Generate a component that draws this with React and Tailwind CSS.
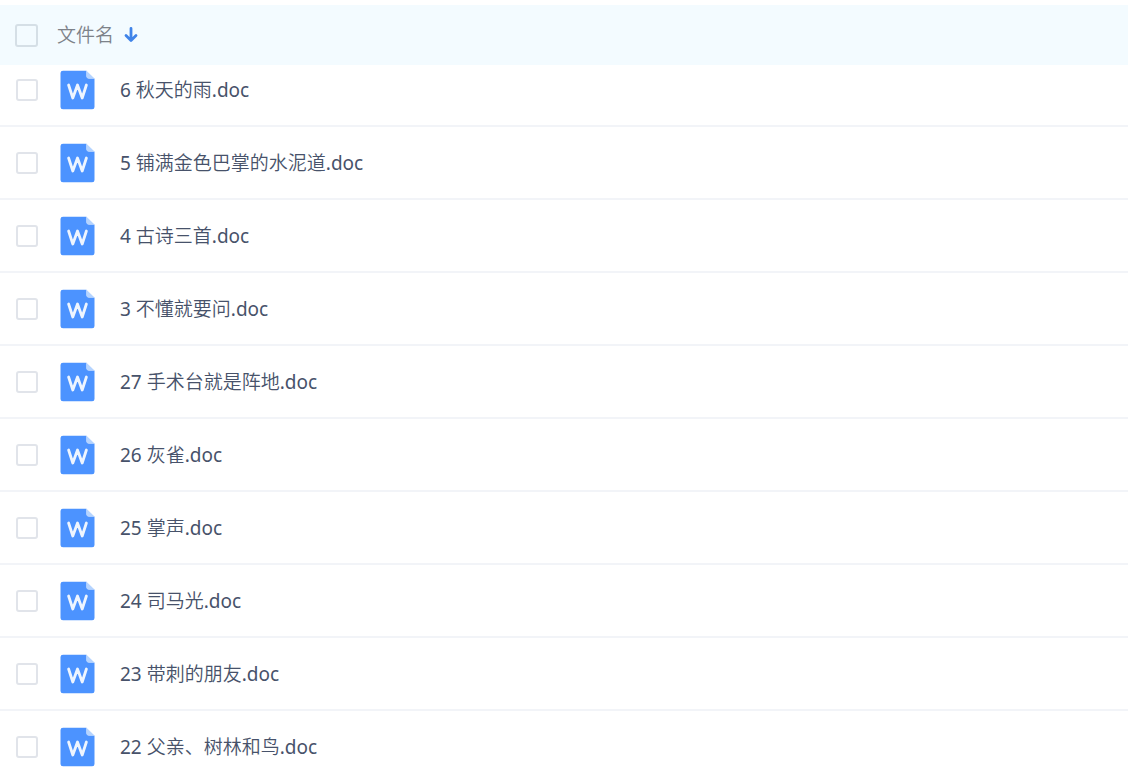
import {useState} from 'react';

const files = [
  '6 秋天的雨.doc',
  '5 铺满金色巴掌的水泥道.doc',
  '4 古诗三首.doc',
  '3 不懂就要问.doc',
  '27 手术台就是阵地.doc',
  '26 灰雀.doc',
  '25 掌声.doc',
  '24 司马光.doc',
  '23 带刺的朋友.doc',
  '22 父亲、树林和鸟.doc',
];

function Checkbox({label, checked, onChange, header}) {
  return (
    <input type="checkbox" aria-label={label} checked={checked} onChange={onChange}
           className={`block appearance-none rounded-[3px] border-2 checked:bg-[#4c93ff] ${header
               ? 'size-[23px] ml-[15px] border-[#d5dfe6]'
               : 'size-[22px] ml-4 border-[#e1e4ea]'}`}/>
  );
}

function DocIcon() {
  return (
    <svg width="36" height="40" viewBox="0 0 36 40" aria-hidden="true" className="shrink-0">
      <path d="M3 0.8H26.5V6Q26.5 8.5 29 8.5H34.5V37Q34.5 39.3 32.2 39.3H3Q0.5 39.3 0.5 37V3Q0.5 0.8 3 0.8Z" fill="#4c93ff"/>
      <path d="M26.5 0.8L34.5 8.5H29Q26.5 8.5 26.5 6Z" fill="#b5d4ff"/>
      <path d="M8.6 15L12.8 28L17.5 15L22.2 28L26.4 15" fill="none" stroke="#eef5ff" strokeWidth="2.8"
            strokeLinejoin="round" strokeLinecap="round"/>
    </svg>
  );
}

function SortArrow() {
  return (
    <svg width="14" height="16" viewBox="0 0 14 16" fill="none" stroke="#3f83e8" strokeWidth="2.8"
         strokeLinecap="round" strokeLinejoin="round" aria-hidden="true">
      <path d="M7 1.5V13M2 8.5L7 13.5L12 8.5"/>
    </svg>
  );
}

export default function App() {
  const [selected, setSelected] = useState([]);
  const [descending, setDescending] = useState(true);
  const rows = descending ? files : [...files].reverse();

  const toggle = (name) => {
    setSelected(prev => prev.includes(name) ? prev.filter(n => n !== name) : [...prev, name]);
  };

  const toggleAll = () => {
    setSelected(prev => prev.length === files.length ? [] : files);
  };

  return (
    <main className="h-screen overflow-hidden bg-white pt-[5px] font-['Noto_Sans','Noto_Sans_CJK_SC_DemiLight','Noto_Sans_CJK_SC_Light','Noto_Sans_CJK_SC',sans-serif] text-[19px] leading-6">
      <table className="w-full border-collapse">
        <thead>
          <tr className="h-[60px] bg-[#f3fbff]">
            <th className="w-[57px] p-0">
              <Checkbox header label="全选" checked={selected.length === files.length}
                        onChange={toggleAll}/>
            </th>
            <th className="p-0 text-left font-normal text-[#7d8289]">
              <button className="flex items-center gap-[10px] cursor-pointer"
                      onClick={() => setDescending(!descending)}>
                文件名
                <SortArrow/>
              </button>
            </th>
          </tr>
        </thead>
        <tbody>
          {rows.map((name, id) => (
            <tr key={name}
                className={`border-b-2 border-[#f2f4f8] ${id === 0 ? 'h-[61px] align-top' : 'h-[73px]'}`}>
              <td className={id === 0 ? 'px-0 pt-[14px]' : 'p-0'}>
                <Checkbox label={name} checked={selected.includes(name)}
                          onChange={() => toggle(name)}/>
              </td>
              <td className={id === 0 ? 'px-0 pt-[5px]' : 'p-0'}>
                <div className="flex items-center gap-6 pl-[3px]">
                  <DocIcon/>
                  <a href="#" className="text-[#47526a]">{name}</a>
                </div>
              </td>
            </tr>
          ))}
        </tbody>
      </table>
    </main>
  );
}
